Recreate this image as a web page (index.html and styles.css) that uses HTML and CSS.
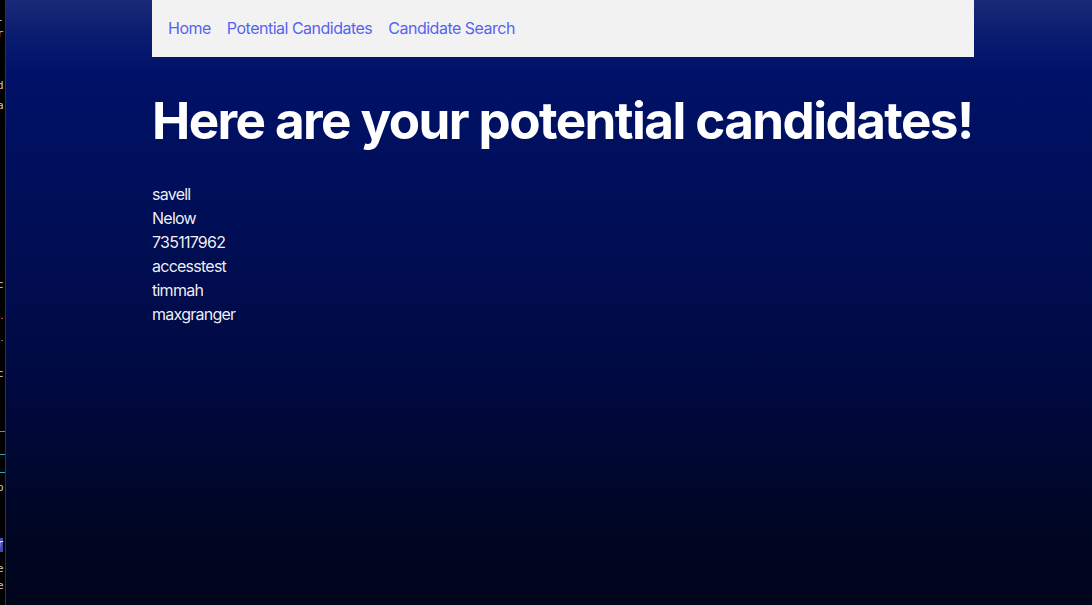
FILE: index.html
```html
<!DOCTYPE html>
<html lang="en">
<head>
<meta charset="utf-8">
<title>Candidates</title>
<link rel="stylesheet" href="styles.css">
</head>
<body>
<div class="page">
  <aside class="strip">
    <span class="frag f1">-</span>
    <span class="frag f2">r</span>
    <span class="frag f3">d</span>
    <span class="frag f4">a</span>
    <span class="frag f5">c</span>
    <span class="frag dot f6"></span>
    <span class="frag dot f7"></span>
    <span class="frag f8">c</span>
    <span class="frag line f9"></span>
    <span class="frag line f10"></span>
    <span class="frag line f11"></span>
    <span class="frag f12">p</span>
    <span class="frag box f13">r</span>
    <span class="frag f14">e</span>
    <span class="frag f15">e</span>
  </aside>
  <main class="main">
    <nav class="nav">
      <a href="#" class="nav-link">Home</a>
      <a href="#" class="nav-link">Potential Candidates</a>
      <a href="#" class="nav-link">Candidate Search</a>
    </nav>
    <h1 class="title">Here are your potential candidates!</h1>
    <ul class="list">
      <li>savell</li>
      <li>Nelow</li>
      <li>735117962</li>
      <li>accesstest</li>
      <li>timmah</li>
      <li>maxgranger</li>
    </ul>
  </main>
</div>
</body>
</html>
```
FILE: styles.css
```css
html, body {
  margin: 0;
  padding: 0;
  height: 100%;
}
body {
  font-family: Inter, "Noto Sans", sans-serif;
  color: rgba(255, 255, 255, 0.94);
  background: #000000;
}
.page {
  display: flex;
  height: 605px;
  overflow: hidden;
}
.strip {
  width: 5px;
  flex: none;
  background: #000;
  border-right: 1px solid #2a3350;
  position: relative;
  overflow: hidden;
  font-family: "DejaVu Sans Mono", monospace;
  font-size: 11px;
  color: #c8c8c8;
}
.frag {
  position: absolute;
  left: -3px;
  line-height: 12px;
}
.f1 { top: 14px; }
.f2 { top: 28px; }
.f3 { top: 80px; }
.f4 { top: 100px; }
.f5 { top: 279px; }
.dot { width: 2px; height: 1px; background: #b05030; left: 1px; }
.f6 { top: 318px; }
.f7 { top: 340px; }
.f8 { top: 368px; }
.line { width: 5px; height: 1px; background: #3aa0b8; left: 0; }
.f9 { top: 431px; }
.f10 { top: 454px; }
.f11 { top: 472px; }
.f12 { top: 482px; }
.box { top: 538px; height: 14px; width: 6px; background: #3b4cc0; color: #fff; }
.f14 { top: 563px; }
.f15 { top: 580px; }
.main {
  flex: 1;
  padding-left: 146px;
  background: linear-gradient(to bottom, #1a2a78 0px, #0a1c70 35px, #001268 75px, #000c4c 300px, #00083a 420px, #000622 540px, #00051c 605px);
}
.nav {
  width: 822px;
  height: 57px;
  box-sizing: border-box;
  background: #f2f2f2;
  display: flex;
  align-items: center;
  gap: 16px;
  padding: 0 16px 2px;
}
.nav-link {
  color: #5763f0;
  text-decoration: none;
  font-size: 16px;
  font-weight: 400;
  letter-spacing: -0.5px;
}
.title {
  margin: 35px 0 0;
  font-size: 51.2px;
  line-height: 1.1;
  font-weight: 700;
  color: #ffffff;
  letter-spacing: -1.6px;
  white-space: nowrap;
}
.list {
  list-style: none;
  margin: 34px 0 0;
  padding: 0;
  font-size: 16px;
  line-height: 24px;
  letter-spacing: -0.75px;
}
```
